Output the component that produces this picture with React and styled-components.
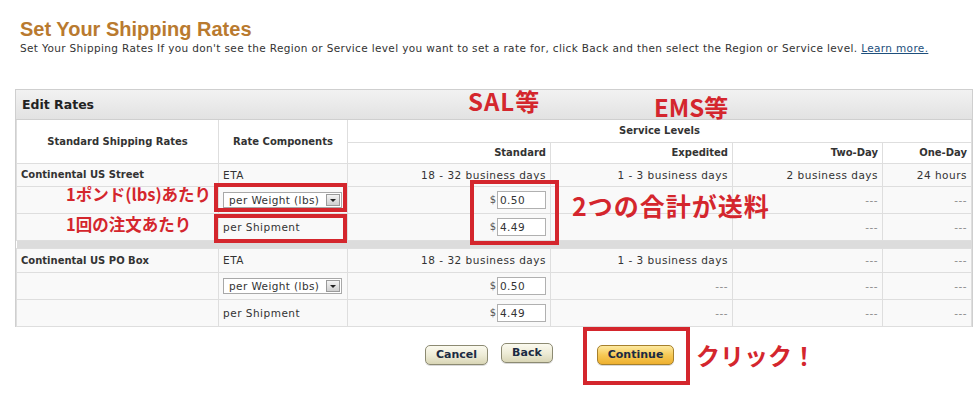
import styled, { createGlobalStyle } from "styled-components";

const red = "#d4262d";

const GlobalStyle = createGlobalStyle`
  html, body {
    margin: 0;
    padding: 0;
    background: #fff;
  }
  body {
    font-family: "DejaVu Sans", Verdana, sans-serif;
    color: #333;
  }
`;

const Page = styled.div`
  position: relative;
  width: 976px;
  height: 393px;
  padding: 17px 3px 0 15px;
  box-sizing: border-box;
  overflow: hidden;
`;

const Intro = styled.div`
  padding-left: 5px;
  height: 72px;
`;

const Title = styled.h1`
  margin: 0;
  font-family: "Liberation Sans", Arial, sans-serif;
  font-size: 20px;
  line-height: 24px;
  font-weight: bold;
  color: #b97a2f;
`;

const Lead = styled.p`
  margin: 0;
  font-size: 10.5px;
  letter-spacing: 0.36px;
  line-height: 14px;
  color: #333;
  white-space: nowrap;
`;

const LearnMore = styled.a`
  color: #1d4f7c;
  text-decoration: underline;
`;

const Panel = styled.div`
  border: 1px solid #cfcfcf;
  border-bottom: none;
  width: 958px;
  box-sizing: border-box;
`;

const PanelHead = styled.div`
  height: 29px;
  display: flex;
  align-items: center;
  padding-left: 6px;
  background: linear-gradient(#f2f2f2, #e2e2e2);
  border-bottom: 1px solid #cfcfcf;
  font-size: 12.5px;
  font-weight: bold;
  color: #222;
`;

const Table = styled.table`
  width: 100%;
  border-collapse: collapse;
  table-layout: fixed;
  font-size: 10px;
`;

const Row = styled.tr`
  height: ${(p) => p.$h}px;
  background: ${(p) => (p.$head ? "#fff" : "#f9f9f9")};
`;

const SepRow = styled.tr`
  height: 8px;
  background: #dcdcdc;
`;

const Th = styled.th`
  border: 1px solid #dedede;
  border-top: none;
  font-weight: bold;
  color: #333;
  padding: 0 4px;
  text-align: ${(p) => p.$align || "right"};
  white-space: nowrap;
`;

const Td = styled.td`
  border: 1px solid #dedede;
  padding: 0 4px;
  text-align: ${(p) => p.$align || "right"};
  font-weight: ${(p) => (p.$bold ? "bold" : "normal")};
  font-size: ${(p) => (p.$bold ? "10px" : "10.5px")};
  letter-spacing: ${(p) => (p.$bold ? "0" : "0.5px")};
  color: ${(p) => (p.$muted ? "#8a8a8a" : "#333")};
  white-space: nowrap;
`;

const Select = styled.div`
  display: inline-flex;
  align-items: center;
  justify-content: space-between;
  width: 119px;
  height: 16px;
  box-sizing: border-box;
  border: 1px solid #a8a8a8;
  background: #fff;
  padding: 0 1px 0 5px;
  font-size: 10.5px;
  letter-spacing: 0.4px;
  vertical-align: middle;
`;

const DropBtn = styled.span`
  width: 14px;
  height: 12px;
  box-sizing: border-box;
  border: 1px solid #9a9a9a;
  background: linear-gradient(#f4f4f4, #cfcfcf);
  display: flex;
  align-items: center;
  justify-content: center;
  &::after {
    content: "";
    border-left: 3px solid transparent;
    border-right: 3px solid transparent;
    border-top: 3px solid #222;
    margin-top: 2px;
  }
`;

const Money = styled.span`
  display: inline-flex;
  align-items: center;
  gap: 1px;
  font-size: 10px;
  letter-spacing: 0;
  color: #555;
`;

const RateInput = styled.input`
  width: 49px;
  height: 18px;
  box-sizing: border-box;
  border: 1px solid #b0b0b0;
  padding: 0 2px;
  font-family: "DejaVu Sans", Verdana, sans-serif;
  font-size: 10.5px;
  letter-spacing: 0.4px;
  color: #333;
  background: #fff;
`;

const Actions = styled.div`
  display: flex;
  align-items: center;
  padding: 18px 0 0 410px;
`;

const Button = styled.button`
  height: 20px;
  padding: 0 10px;
  margin-left: ${(p) => p.$gap || 0}px;
  margin-top: ${(p) => p.$lift || 0}px;
  border-radius: 5px;
  font-family: "DejaVu Sans", Verdana, sans-serif;
  font-size: 11px;
  font-weight: bold;
  color: #1b2a42;
  border: 1px solid ${(p) => (p.$primary ? "#a6802c" : "#8c8a72")};
  background: ${(p) =>
    p.$primary
      ? "linear-gradient(#fde9a0, #f6c955 50%, #eeb02f)"
      : "linear-gradient(#fbfaef, #ecead4 55%, #d9d6b6)"};
  box-shadow: 0 1px 0 rgba(0, 0, 0, 0.15);
  line-height: 18px;
`;

const RedBox = styled.div`
  position: absolute;
  left: ${(p) => p.$x}px;
  top: ${(p) => p.$y}px;
  width: ${(p) => p.$w}px;
  height: ${(p) => p.$h}px;
  box-sizing: border-box;
  border: 4px solid ${red};
  pointer-events: none;
`;

const Note = styled.div`
  position: absolute;
  left: ${(p) => p.$x}px;
  top: ${(p) => p.$y}px;
  font-family: "Noto Sans CJK JP", "Noto Sans", sans-serif;
  font-weight: bold;
  font-size: ${(p) => p.$size}px;
  letter-spacing: ${(p) => p.$ls || 0}px;
  line-height: 1;
  color: ${red};
  white-space: nowrap;
  background: ${(p) => (p.$plate ? "#fff" : "transparent")};
  padding: ${(p) => (p.$plate ? "9px 3px 6px 4px" : "0")};
`;

const dashes = (n) =>
  Array.from({ length: n }, (_, i) => (
    <Td key={i} $muted>
      ---
    </Td>
  ));

// covered: the Expedited cell sits under the "2つの合計が送料" note
const WeightRow = ({ covered }) => (
  <Row $h={27}>
    <Td />
    <Td $align="left">
      <Select>
        per Weight (lbs)
        <DropBtn />
      </Select>
    </Td>
    <Td>
      <Money>
        $<RateInput readOnly defaultValue="0.50" />
      </Money>
    </Td>
    {covered ? <Td /> : dashes(1)}
    {dashes(2)}
  </Row>
);

const ShipmentRow = ({ covered }) => (
  <Row $h={27}>
    <Td />
    <Td $align="left">per Shipment</Td>
    <Td>
      <Money>
        $<RateInput readOnly defaultValue="4.49" />
      </Money>
    </Td>
    {covered ? <Td /> : dashes(1)}
    {dashes(2)}
  </Row>
);

export default function App() {
  return (
    <>
      <GlobalStyle />
      <Page>
        <Intro>
          <Title>Set Your Shipping Rates</Title>
          <Lead>
            Set Your Shipping Rates If you don't see the Region or Service
            level you want to set a rate for, click Back and then select the
            Region or Service level. <LearnMore>Learn more.</LearnMore>
          </Lead>
        </Intro>

        <Panel>
          <PanelHead>Edit Rates</PanelHead>
          <Table>
            <colgroup>
              <col style={{ width: 202 }} />
              <col style={{ width: 129 }} />
              <col style={{ width: 203 }} />
              <col style={{ width: 182 }} />
              <col style={{ width: 150 }} />
              <col />
            </colgroup>
            <tbody>
              <Row $head $h={22}>
                <Th rowSpan={2} $align="center">
                  Standard Shipping Rates
                </Th>
                <Th rowSpan={2} $align="center">
                  Rate Components
                </Th>
                <Th colSpan={4} $align="center">
                  Service Levels
                </Th>
              </Row>
              <Row $head $h={21}>
                <Th>Standard</Th>
                <Th>Expedited</Th>
                <Th>Two-Day</Th>
                <Th>One-Day</Th>
              </Row>
              <Row $h={23}>
                <Td $align="left" $bold>
                  Continental US Street
                </Td>
                <Td $align="left">ETA</Td>
                <Td>18 - 32 business days</Td>
                <Td>1 - 3 business days</Td>
                <Td>2 business days</Td>
                <Td>24 hours</Td>
              </Row>
              <WeightRow covered />
              <ShipmentRow covered />
              <SepRow>
                <td colSpan={6} />
              </SepRow>
              <Row $h={24}>
                <Td $align="left" $bold>
                  Continental US PO Box
                </Td>
                <Td $align="left">ETA</Td>
                <Td>18 - 32 business days</Td>
                <Td>1 - 3 business days</Td>
                {dashes(2)}
              </Row>
              <WeightRow />
              <ShipmentRow />
            </tbody>
          </Table>
        </Panel>

        <Actions>
          <Button>Cancel</Button>
          <Button $gap={13} $lift={-3}>
            Back
          </Button>
          <Button $primary $gap={44}>
            Continue
          </Button>
        </Actions>

        <Note $x={468} $y={89} $size={24} $ls={1}>
          SAL等
        </Note>
        <Note $x={654} $y={95} $size={24}>
          EMS等
        </Note>
        <Note $x={66} $y={186} $size={16.5}>
          1ポンド(lbs)あたり
        </Note>
        <Note $x={66} $y={216} $size={16.5}>
          1回の注文あたり
        </Note>
        <Note $x={572} $y={193} $size={25} $ls={1}>
          2つの合計が送料
        </Note>
        <Note $x={696} $y={343} $size={24}>
          クリック！
        </Note>

        <RedBox $x={214} $y={183} $w={133} $h={29} />
        <RedBox $x={214} $y={214} $w={133} $h={29} />
        <RedBox $x={470} $y={180} $w={89} $h={65} />
        <RedBox $x={583} $y={327} $w={107} $h={58} />
      </Page>
    </>
  );
}
